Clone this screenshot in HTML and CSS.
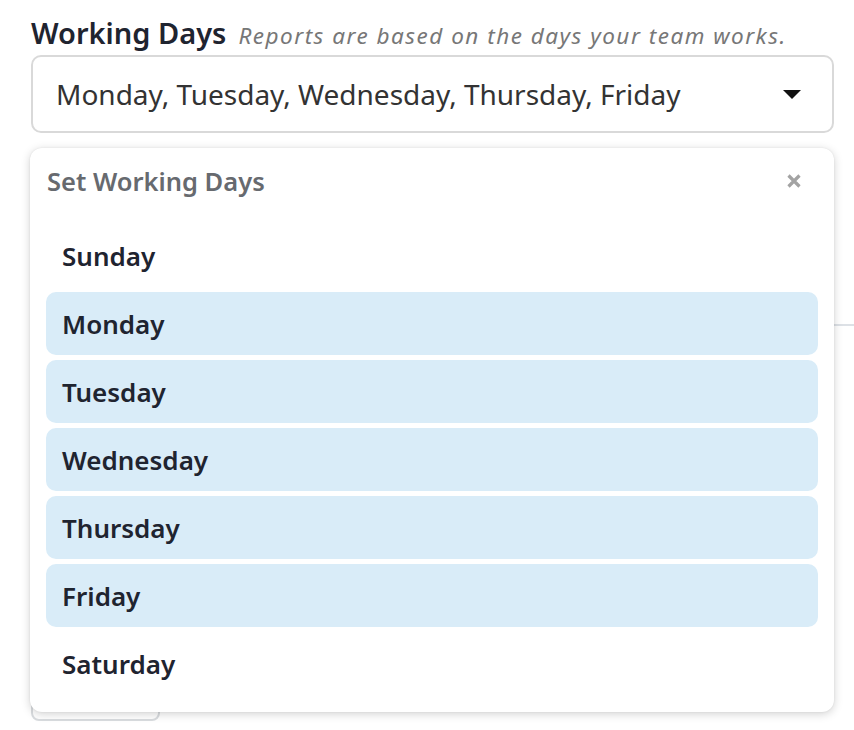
FILE: index.html
```html
<!DOCTYPE html>
<html lang="en">
<head>
    <meta charset="UTF-8">
    <meta name="viewport" content="width=device-width, initial-scale=1.0">
    <title>Working Days</title>
    <link rel="stylesheet" href="styles.css">
</head>
<body>

    <div class="field">
        <div class="field-label">
            <span class="label-title">Working Days</span>
            <span class="label-hint">Reports are based on the days your team works.</span>
        </div>

        <div class="select-box">
            <span class="select-value">Monday, Tuesday, Wednesday, Thursday, Friday</span>
            <span class="caret"></span>
        </div>

        <div class="under">
            <div class="under-rule"></div>
            <div class="under-button"></div>
        </div>

        <!-- Open dropdown panel -->
        <div class="panel">
            <div class="panel-head">
                <span class="panel-title">Set Working Days</span>
                <svg class="close" width="16" height="16" viewBox="0 0 16 16">
                    <path d="M2.5 2.5 L13.5 13.5 M13.5 2.5 L2.5 13.5" stroke="#a3a3a3" stroke-width="3.2" stroke-linecap="butt"/>
                </svg>
            </div>
            <ul class="day-list">
                <li class="day">Sunday</li>
                <li class="day selected">Monday</li>
                <li class="day selected">Tuesday</li>
                <li class="day selected">Wednesday</li>
                <li class="day selected">Thursday</li>
                <li class="day selected">Friday</li>
                <li class="day">Saturday</li>
            </ul>
        </div>
    </div>

</body>
</html>
```

FILE: styles.css
```css
body {
    font-family: "Noto Sans", "Open Sans", sans-serif;
    background-color: white;
    margin: 0;
    padding: 13px 20px 0 31px;
    overflow: hidden;
    height: 730px;
    box-sizing: border-box;
}

.field {
    position: relative;
    width: 803px;
}

.field-label {
    display: flex;
    align-items: baseline;
    gap: 12px;
    height: 41px;
    white-space: nowrap;
}

.label-title {
    font-size: 29px;
    font-weight: 600;
    color: #1f2430;
}

.label-hint {
    font-size: 22.5px;
    font-style: italic;
    letter-spacing: 1.5px;
    color: #777;
}

.select-box {
    display: flex;
    align-items: center;
    justify-content: space-between;
    height: 78px;
    box-sizing: border-box;
    margin-top: 1px;
    padding: 0 31px 0 23px;
    border: 2px solid #d9d9d9;
    border-radius: 10px;
}

.select-value {
    font-size: 28px;
    color: #333;
}

.caret {
    width: 0;
    height: 0;
    border-left: 9px solid transparent;
    border-right: 9px solid transparent;
    border-top: 9px solid #111;
}

.under {
    position: relative;
    height: 600px;
}

.under-rule {
    position: absolute;
    top: 191px;
    left: 780px;
    width: 60px;
    height: 2px;
    background-color: #dde1e6;
}

.under-button {
    position: absolute;
    top: 528px;
    left: 0;
    width: 129px;
    height: 60px;
    box-sizing: border-box;
    border: 2px solid #d9dcdf;
    border-radius: 8px;
}

.panel {
    position: absolute;
    top: 135px;
    left: -1px;
    width: 804px;
    box-sizing: border-box;
    padding: 16px 16px 17px 16px;
    background-color: white;
    border-radius: 12px;
    box-shadow: 0 2px 10px rgba(0, 0, 0, 0.18), 0 0 2px rgba(0, 0, 0, 0.08);
}

.panel-head {
    display: flex;
    align-items: center;
    justify-content: space-between;
    height: 34px;
    padding: 0 16px 0 1px;
    margin-bottom: 26px;
}

.panel-title {
    font-size: 25.5px;
    font-weight: 600;
    color: #676a6f;
}

.close {
    display: block;
}

.day-list {
    list-style: none;
    margin: 0;
    padding: 0;
    display: flex;
    flex-direction: column;
    gap: 5px;
}

.day {
    height: 63px;
    display: flex;
    align-items: center;
    padding-left: 16px;
    border-radius: 10px;
    font-size: 26px;
    font-weight: 600;
    color: #1f2430;
}

.day.selected {
    background-color: #d9ecf8;
}
```
